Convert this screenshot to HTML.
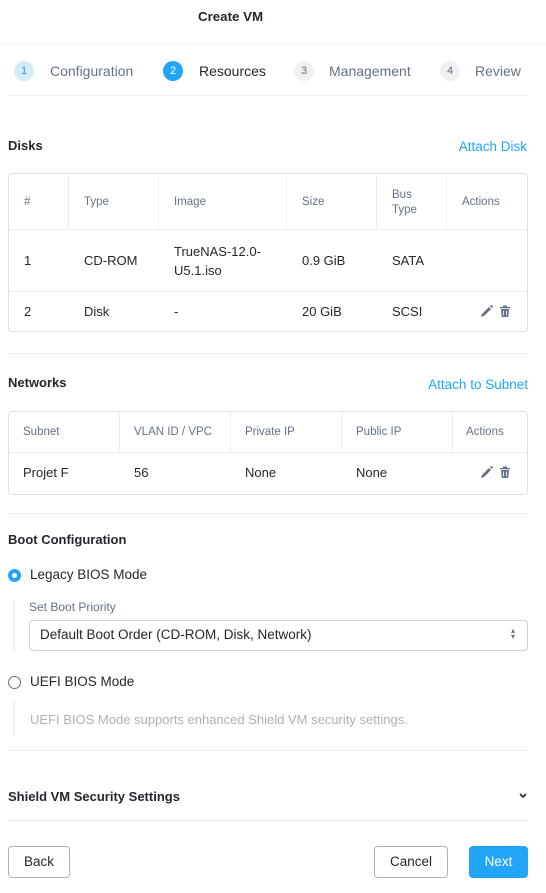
<!DOCTYPE html><html><head><style>
*{box-sizing:border-box;margin:0;padding:0}
body{width:546px;height:893px;background:#fff;font-family:"Liberation Sans",sans-serif;color:#22272e;position:relative;overflow:hidden;font-size:13px}
.a{position:absolute;white-space:nowrap}
.hr{position:absolute;left:8px;width:520px;height:1px;background:#ececef}
.c{width:20px;height:20px;border-radius:50%;font-size:11px;text-align:center;line-height:20px}
.g{color:#627386}
.s{font-size:14px}
.h{font-size:11.5px;color:#627386}
.b{font-weight:bold;font-size:13px}
.l{color:#22a5f7;font-size:13.5px}
.tb{position:absolute;left:8px;width:520px;border:1px solid #dde0e5;border-radius:4px}
.vl{position:absolute;width:1px;background:#eceef1}
.btn{position:absolute;height:32px;border:1px solid #aab3bd;border-radius:4px;text-align:center;line-height:30px;font-size:13.5px}
</style></head><body>
<div class="a b" style="left:198px;top:9px;font-size:13.3px">Create VM</div>
<div class="hr" style="top:43px;left:0;width:546px;background:#f3f3f5"></div>
<div class="a c" style="left:14px;top:61px;background:#d4ecfc;color:#3a8fd0">1</div>
<div class="a g s" style="left:50px;top:63px">Configuration</div>
<div class="a c" style="left:163px;top:61px;background:#22a5f7;color:#fff">2</div>
<div class="a s" style="left:199px;top:63px">Resources</div>
<div class="a c" style="left:294px;top:61px;background:#eef0f2;color:#627386">3</div>
<div class="a g s" style="left:329px;top:63px">Management</div>
<div class="a c" style="left:440px;top:61px;background:#eef0f2;color:#627386">4</div>
<div class="a g s" style="left:475px;top:63px">Review</div>
<div class="hr" style="top:95px"></div>

<div class="a b" style="left:8px;top:138px">Disks</div>
<div class="a l" style="right:19px;top:139px">Attach Disk</div>
<div class="tb" style="top:173px;height:159px">
<div class="vl" style="left:59px;top:0;height:55px"></div><div class="vl" style="left:149px;top:0;height:55px"></div><div class="vl" style="left:277px;top:0;height:55px"></div><div class="vl" style="left:367px;top:0;height:55px"></div><div class="vl" style="left:437px;top:0;height:55px"></div>
<div style="position:absolute;left:0;right:0;top:55px;height:1px;background:#eceef1"></div>
<div style="position:absolute;left:0;right:0;top:117px;height:1px;background:#eceef1"></div>
</div>
<div class="a h" style="left:24px;top:196px">#</div>
<div class="a h" style="left:84px;top:196px">Type</div>
<div class="a h" style="left:174px;top:196px">Image</div>
<div class="a h" style="left:302px;top:196px">Size</div>
<div class="a h" style="left:392px;top:188px;line-height:15px">Bus<br>Type</div>
<div class="a h" style="left:462px;top:196px">Actions</div>
<div class="a" style="left:24px;top:253px">1</div>
<div class="a" style="left:84px;top:253px">CD-ROM</div>
<div class="a" style="left:174px;top:242px;line-height:19px">TrueNAS-12.0-<br>U5.1.iso</div>
<div class="a" style="left:302px;top:253px">0.9 GiB</div>
<div class="a" style="left:392px;top:253px">SATA</div>
<div class="a" style="left:24px;top:304px">2</div>
<div class="a" style="left:84px;top:304px">Disk</div>
<div class="a" style="left:174px;top:304px">-</div>
<div class="a" style="left:302px;top:304px">20 GiB</div>
<div class="a" style="left:392px;top:304px">SCSI</div>
<svg class="a" style="left:480px;top:304px" width="32" height="14" viewBox="0 0 32 14"><path d="M1 13l1-3 7-7 2 2-7 7z M10 2l1.2-1.2 2 2L12 4z" fill="#627386"/><path d="M20 3h10v1.3H20z M23 1.5h4V3h-4z M21 5h8l-.7 8h-6.6z" fill="#627386"/><path d="M23.5 6.5v5M26.5 6.5v5" stroke="#fff" stroke-width=".8"/></svg>

<div class="hr" style="top:353px"></div>
<div class="a b" style="left:8px;top:375px">Networks</div>
<div class="a l" style="right:18px;top:377px">Attach to Subnet</div>
<div class="tb" style="top:411px;height:84px">
<div class="vl" style="left:110px;top:0;height:40px"></div><div class="vl" style="left:221px;top:0;height:40px"></div><div class="vl" style="left:332px;top:0;height:40px"></div><div class="vl" style="left:443px;top:0;height:40px"></div>
<div style="position:absolute;left:0;right:0;top:40px;height:1px;background:#eceef1"></div>
</div>
<div class="a h" style="left:23px;top:426px">Subnet</div>
<div class="a h" style="left:134px;top:426px">VLAN ID / VPC</div>
<div class="a h" style="left:245px;top:426px">Private IP</div>
<div class="a h" style="left:356px;top:426px">Public IP</div>
<div class="a h" style="left:466px;top:426px">Actions</div>
<div class="a" style="left:23px;top:465px">Projet F</div>
<div class="a" style="left:134px;top:465px">56</div>
<div class="a" style="left:245px;top:465px">None</div>
<div class="a" style="left:356px;top:465px">None</div>
<svg class="a" style="left:480px;top:465px" width="32" height="14" viewBox="0 0 32 14"><path d="M1 13l1-3 7-7 2 2-7 7z M10 2l1.2-1.2 2 2L12 4z" fill="#627386"/><path d="M20 3h10v1.3H20z M23 1.5h4V3h-4z M21 5h8l-.7 8h-6.6z" fill="#627386"/><path d="M23.5 6.5v5M26.5 6.5v5" stroke="#fff" stroke-width=".8"/></svg>

<div class="hr" style="top:513px"></div>
<div class="a b" style="left:8px;top:532px">Boot Configuration</div>
<div class="a" style="left:8px;top:569px;width:13px;height:13px;border-radius:50%;background:#22a5f7"><div style="position:absolute;left:4px;top:4px;width:5px;height:5px;border-radius:50%;background:#fff"></div></div>
<div class="a" style="left:30px;top:567px;font-size:13.5px">Legacy BIOS Mode</div>
<div class="a" style="left:13px;top:601px;width:2px;height:50px;background:#eef0f2"></div>
<div class="a h" style="left:29px;top:600px;font-size:12px">Set Boot Priority</div>
<div class="a" style="left:29px;top:620px;width:499px;height:31px;border:1px solid #cdd2d8;border-radius:4px"></div>
<div class="a" style="left:40px;top:627px;font-size:13.5px">Default Boot Order (CD-ROM, Disk, Network)</div>
<div class="a" style="left:511px;top:628px;font-size:8px;line-height:6px;color:#627386">▴<br>▾</div>
<div class="a" style="left:8px;top:676px;width:13px;height:13px;border-radius:50%;border:1px solid #627386"></div>
<div class="a" style="left:30px;top:674px;font-size:13.5px">UEFI BIOS Mode</div>
<div class="a" style="left:13px;top:702px;width:2px;height:33px;background:#eef0f2"></div>
<div class="a" style="left:30px;top:712px;color:#a9b2bc">UEFI BIOS Mode supports enhanced Shield VM security settings.</div>
<div class="hr" style="top:750px"></div>
<div class="a b" style="left:8px;top:789px">Shield VM Security Settings</div>
<svg class="a" style="left:519px;top:793px" width="8" height="6"><path d="M1 1l3 3 3-3" stroke="#22272e" stroke-width="1.6" fill="none"/></svg>
<div class="hr" style="top:820px"></div>
<div class="btn" style="left:8px;top:846px;width:62px">Back</div>
<div class="btn" style="left:374px;top:846px;width:74px">Cancel</div>
<div class="btn" style="left:469px;top:846px;width:59px;background:#22a5f7;border-color:#22a5f7;color:#fff">Next</div>
</body></html>
